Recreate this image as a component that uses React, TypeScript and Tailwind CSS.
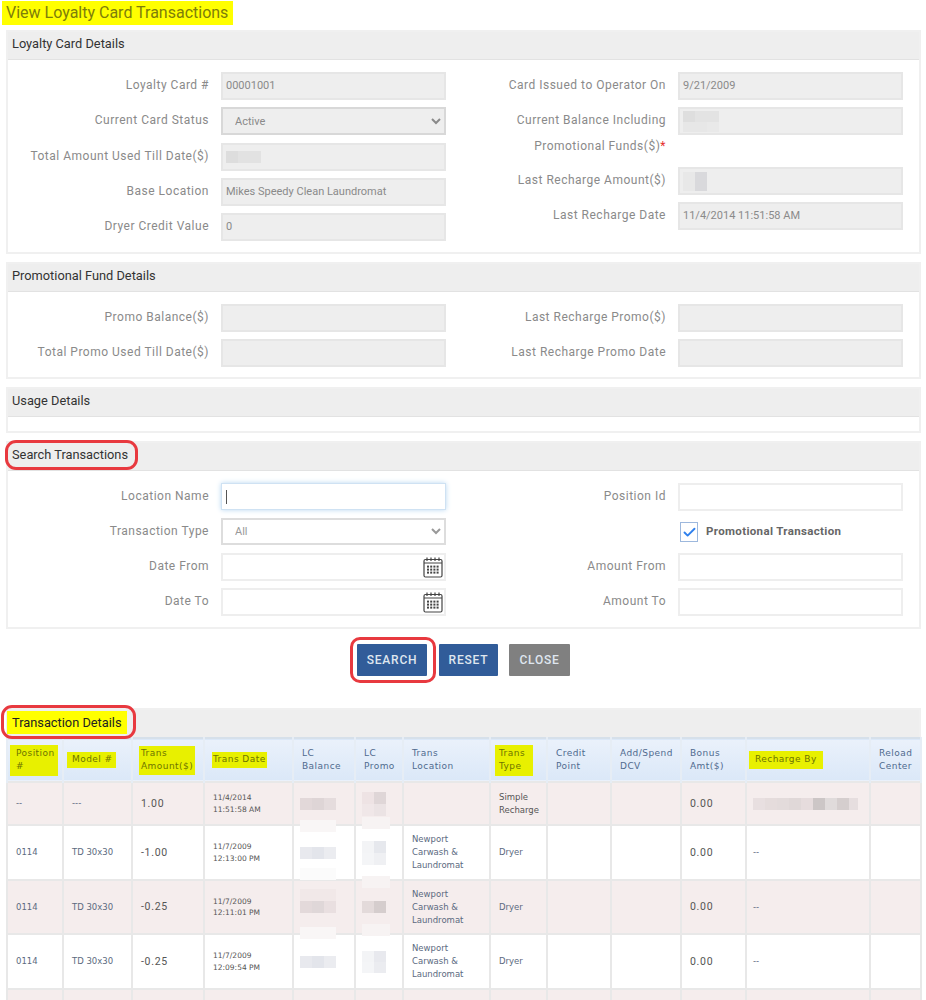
import React from "react";
import { Check } from "lucide-react";

const roboto = "font-['Roboto',sans-serif]";

function Calendar() {
  const dots = [];
  for (let r = 0; r < 3; r++) for (let c = 0; c < 4; c++) dots.push(<rect key={`${r}${c}`} x={4 + c * 3.2} y={8.6 + r * 3} width="2" height="2" fill="#444" />);
  return (
    <svg width="20" height="21" viewBox="0 0 20 21" className="shrink-0">
      <rect x="1" y="2.5" width="18" height="17.5" rx="1.5" fill="none" stroke="#444" strokeWidth="1.2" />
      <line x1="1" y1="6" x2="19" y2="6" stroke="#444" strokeWidth="1" />
      {[4, 8, 12, 16].map((x) => <line key={x} x1={x} y1="0.5" x2={x} y2="4" stroke="#444" strokeWidth="1.2" />)}
      {dots}
    </svg>
  );
}

function Panel({ title, ring, children, className }: { title: string; ring?: boolean; children?: React.ReactNode; className: string }) {
  return (
    <section className={`mx-[6px] w-[915px] border-2 border-[#f0f0f0] bg-white ${className}`}>
      <div className="flex h-[28px] items-center border-b border-[#e2e2e2] bg-[#eeeeee] pb-[3px] pl-[4px] text-[12.8px] text-[#333]">
        <span className="relative">
          {title}
          {ring && <span className="absolute -inset-y-[5px] -left-[7px] -right-[10px] rounded-[11px] border-[3px] border-[#e8393f]" />}
        </span>
      </div>
      {children}
    </section>
  );
}

function Label({ children, w }: { children: React.ReactNode; w: string }) {
  return <div className={`${w} text-right text-[12px] leading-[27px] tracking-[0.5px] text-[#8a8a8a]`}>{children}</div>;
}

const disabledBox = "flex h-[28px] w-[225px] items-center border-2 border-[#e6e6e6] bg-[#eeeeee] px-[3px] text-[11px] text-[#8a8a8a]";
const emptyBox = "flex h-[28px] w-[225px] items-center justify-end border-2 border-[#eeeeee] bg-white pr-[1px]";

function Row({ label, w, children, cls = "h-[35px]" }: { label: React.ReactNode; w: string; children: React.ReactNode; cls?: string }) {
  return (
    <div className={`flex gap-[12px] ${cls}`}>
      <Label w={w}>{label}</Label>
      {children}
    </div>
  );
}

const LW = "w-[201px]";
const RW = "w-[219px]";

function Columns({ left, right, pb }: { left: React.ReactNode; right: React.ReactNode; pb: string }) {
  return (
    <div className={`flex pt-[12px] ${pb}`}>
      <div className="w-[439px]">{left}</div>
      <div>{right}</div>
    </div>
  );
}

function Mosaic({ cols, cls = "h-[12px]" }: { cols: string[]; cls?: string }) {
  return (
    <div className={`flex w-fit ${cls}`}>
      {cols.map((c, i) => <div key={i} className={c} />)}
    </div>
  );
}

const H = ({ children, mark = "" }: { children: React.ReactNode; mark?: string }) => (
  <th className="border-x-2 border-[#e6edf5] px-[8px] text-left align-middle font-normal">
    {mark ? <span className={`inline-block bg-[#e8f000] text-[#6d7400] ${mark}`}>{children}</span> : children}
  </th>
);

const cell = "border-2 border-[#e8e8e8] px-[8px] align-middle";
const num = `${roboto} text-[10.5px] tracking-[0.7px] text-[#555]`;
const patch = "absolute z-10";

type RowData = {
  pos: string; model: string; amt: string; d1: string; d2: string; h: string; bg: string;
  bal: React.ReactNode; pro: React.ReactNode; loc: boolean; type: React.ReactNode; by: React.ReactNode;
};

const rows: RowData[] = [
  {
    pos: "--", model: "---", amt: "1.00", d1: "11/4/2014", d2: "11:51:58 AM", h: "h-[43px]", bg: "bg-[#f5eded]",
    bal: <><Mosaic cols={["w-[12px] bg-[#e2d8d9]", "w-[12px] bg-[#ded5d6]", "w-[12px] bg-[#e5dcdd]"]} /><div className={`${patch} left-[6px] top-[37px] h-[12px] w-[36px] bg-[#f9f6f6]`} /></>,
    pro: <><div className="grid w-[24px] grid-cols-2"><div className="h-[12px] bg-[#eee3e4]" /><div className="h-[12px] bg-[#dfd6d7]" /><div className="h-[12px] bg-[#f0e7e8]" /><div className="h-[12px] bg-[#ebe3e4]" /></div><div className={`${patch} left-[6px] top-[34px] h-[12px] w-[28px] bg-[#f7f3f3]`} /></>,
    loc: false,
    type: <span className="block leading-[13px] text-[#555]">Simple<br />Recharge</span>,
    by: <Mosaic cols={["w-[12px] bg-[#e8dfe0]", "w-[12px] bg-[#e5dcdc]", "w-[12px] bg-[#e3dbdb]", "w-[12px] bg-[#e0d8d8]", "w-[12px] bg-[#e6dcdd]", "w-[12px] bg-[#ccc6c6]", "w-[12px] bg-[#e0dbdb]", "w-[12px] bg-[#d5cece]", "w-[9px] bg-[#e6dedf]"]} />,
  },
  {
    pos: "0114", model: "TD 30x30", amt: "-1.00", d1: "11/7/2009", d2: "12:13:00 PM", h: "h-[55px]", bg: "bg-white",
    bal: <><Mosaic cols={["w-[12px] bg-[#e8e9ee]", "w-[12px] bg-[#e3e5eb]", "w-[12px] bg-[#ebecf0]"]} /><div className={`${patch} left-[6px] top-[42px] h-[12px] w-[36px] bg-[#fbfbfb]`} /></>,
    pro: <><div className="grid w-[24px] grid-cols-2"><div className="h-[12px] bg-[#f3f4f6]" /><div className="h-[12px] bg-[#e6e8ed]" /><div className="h-[12px] bg-[#f4f5f7]" /><div className="h-[12px] bg-[#eff0f3]" /></div><div className={`${patch} left-[6px] top-[50px] h-[12px] w-[28px] bg-[#f7f3f3]`} /></>,
    loc: true, type: "Dryer", by: "--",
  },
  {
    pos: "0114", model: "TD 30x30", amt: "-0.25", d1: "11/7/2009", d2: "12:11:01 PM", h: "h-[54px]", bg: "bg-[#f5eded]",
    bal: <><div className="-mt-[12px]"><Mosaic cols={["w-[36px] bg-[#f1e8e8]"]} /></div><Mosaic cols={["w-[12px] bg-[#e3d9da]", "w-[12px] bg-[#dfd7d8]", "w-[12px] bg-[#e9dfe0]"]} /><div className={`${patch} left-[6px] top-[46px] h-[12px] w-[36px] bg-[#f9f6f6]`} /></>,
    pro: <><Mosaic cols={["w-[12px] bg-[#e3dada]", "w-[12px] bg-[#d5cdcd]"]} /><div className={`${patch} left-[6px] top-[43px] h-[12px] w-[28px] bg-[#f7f3f3]`} /></>,
    loc: true, type: "Dryer", by: "--",
  },
  {
    pos: "0114", model: "TD 30x30", amt: "-0.25", d1: "11/7/2009", d2: "12:09:54 PM", h: "h-[55px]", bg: "bg-white",
    bal: <Mosaic cols={["w-[12px] bg-[#e8e9ee]", "w-[12px] bg-[#e3e5eb]", "w-[12px] bg-[#ebecf0]"]} />,
    pro: <div className="grid w-[24px] grid-cols-2"><div className="h-[11px] bg-[#f3f4f6]" /><div className="h-[11px] bg-[#e8e9ee]" /><div className="h-[11px] bg-[#f4f5f7]" /><div className="h-[11px] bg-[#ebecf0]" /></div>,
    loc: true, type: "Dryer", by: "--",
  },
];

export default function App() {
  return (
    <div className={`h-[1000px] w-[926px] overflow-hidden bg-white ${roboto}`}>
      <div className="h-[30px] pl-[2px] pt-[1px]">
        <div className="flex h-[24px] w-[231px] items-center whitespace-nowrap bg-[#ffff00] pl-[4px] text-[16px] text-[#7d7d0a]">View Loyalty Card Transactions</div>
      </div>

      <Panel title="Loyalty Card Details" className="h-[224px]">
        <Columns
          pb="pb-[12px]"
          left={<>
            <Row label="Loyalty Card #" w={LW}><div className={disabledBox}>00001001</div></Row>
            <Row label="Current Card Status" w={LW} cls="h-[36px]">
              <select defaultValue="Active" className="h-[28px] w-[225px] border-2 border-[#d8d8d8] bg-[#eeeeee] pl-[8px] text-[11px] text-[#8a8a8a]"><option>Active</option></select>
            </Row>
            <Row label="Total Amount Used Till Date($)" w={LW}><div className={disabledBox}><Mosaic cols={["w-[12px] bg-[#dddddd]", "w-[23px] bg-[#e2e2e2]"]} /></div></Row>
            <Row label="Base Location" w={LW}><div className={disabledBox}>Mikes Speedy Clean Laundromat</div></Row>
            <Row label="Dryer Credit Value" w={LW}><div className={disabledBox}>0</div></Row>
          </>}
          right={<>
            <Row label="Card Issued to Operator On" w={RW}><div className={disabledBox}>9/21/2009</div></Row>
            <Row cls="h-[60px]" w={RW} label={<div className="leading-[26px]">Current Balance Including<br />Promotional Funds($)<span className="text-[#e52e2e]">*</span></div>}>
              <div className={disabledBox}>
                <div className="grid w-[36px] grid-cols-3">
                  <div className="h-[11px] bg-[#dedede]" /><div className="h-[11px] bg-[#e3e3e3]" /><div className="h-[11px] bg-[#e3e3e3]" />
                  <div className="h-[10px] bg-[#e7e7e7]" /><div className="h-[10px] bg-[#e7e7e7]" /><div className="h-[10px] bg-[#e9e9e9]" />
                </div>
              </div>
            </Row>
            <Row label="Last Recharge Amount($)" w={RW}><div className={disabledBox}><Mosaic cls="h-[19px]" cols={["w-[12px] bg-[#e8e8e8]", "w-[12px] bg-[#d9d9dc]"]} /></div></Row>
            <Row label="Last Recharge Date" w={RW}><div className={disabledBox}>11/4/2014 11:51:58 AM</div></Row>
          </>}
        />
      </Panel>

      <Panel title="Promotional Fund Details" className="mt-[8px] h-[117px]">
        <Columns
          pb="pb-[10px]"
          left={<>
            <Row label="Promo Balance($)" w={LW}><div className={disabledBox} /></Row>
            <Row label="Total Promo Used Till Date($)" w={LW}><div className={disabledBox} /></Row>
          </>}
          right={<>
            <Row label="Last Recharge Promo($)" w={RW}><div className={disabledBox} /></Row>
            <Row label="Last Recharge Promo Date" w={RW}><div className={disabledBox} /></Row>
          </>}
        />
      </Panel>

      <Panel title="Usage Details" className="mt-[8px] h-[46px]" />

      <Panel title="Search Transactions" ring className="mt-[8px] h-[188px]">
        <Columns
          pb="pb-[10px]"
          left={<>
            <Row label="Location Name" w={LW}>
              <div className="flex h-[27px] w-[225px] items-center border border-[#cfe2f3] bg-white pl-[4px] shadow-[0_0_5px_#b9d8f2]"><div className="h-[14px] w-px bg-[#555]" /></div>
            </Row>
            <Row label="Transaction Type" w={LW}>
              <select defaultValue="All" className="h-[27px] w-[225px] border-2 border-[#dddddd] bg-white pl-[8px] text-[11px] text-[#999]"><option>All</option></select>
            </Row>
            <Row label="Date From" w={LW}><div className={emptyBox}><Calendar /></div></Row>
            <Row label="Date To" w={LW}><div className={emptyBox}><Calendar /></div></Row>
          </>}
          right={<>
            <Row label="Position Id" w={RW}><div className={emptyBox} /></Row>
            <Row label="" w={RW}>
              <div className="flex h-[28px] items-center gap-[8px] pl-[2px]">
                <div className="flex h-[20px] w-[18px] items-center justify-center border border-[#9db8dd] bg-white"><Check size={15} strokeWidth={3} color="#2f80ed" /></div>
                <span className="text-[11.5px] font-bold tracking-[0.35px] text-[#666]">Promotional Transaction</span>
              </div>
            </Row>
            <Row label="Amount From" w={RW}><div className={emptyBox} /></Row>
            <Row label="Amount To" w={RW}><div className={emptyBox} /></Row>
          </>}
        />
      </Panel>

      <div className="mt-[15px] flex h-[33px] pl-[357px] text-[12px] font-medium tracking-[0.8px] text-[#dfe6ef]">
        <button className="relative h-[32px] w-[70px] rounded-[1px] bg-[#315c99]">
          SEARCH
          <span className="absolute -inset-y-[7px] -left-[7px] -right-[9px] rounded-[10px] border-[3px] border-[#e8393f]" />
        </button>
        <button className="ml-[12px] h-[32px] w-[59px] rounded-[1px] bg-[#315c99]">RESET</button>
        <button className="ml-[11px] h-[32px] w-[61px] rounded-[1px] bg-[#808080]">CLOSE</button>
      </div>

      <section className="mx-[6px] mt-[31px] w-[915px] border-x-2 border-t-2 border-[#f0f0f0]">
        <div className="flex h-[27px] items-center bg-[#eeeeee] pb-[2px] pl-[4px] text-[12.8px] text-[#222]">
          <span className="relative">
            <span className="relative z-10 -mx-[5px] inline-block bg-[#ffff00] px-[5px] leading-[23px]">Transaction Details</span>
            <span className="absolute -bottom-[5px] -left-[11px] -right-[14px] -top-[6px] rounded-[11px] border-[3px] border-[#e8393f]" />
          </span>
        </div>
        <table className="-ml-[2px] w-[914px] table-fixed border-collapse font-['DejaVu_Sans',sans-serif] text-[8.5px]">
          <colgroup>
            <col className="w-[56px]" /><col className="w-[69px]" /><col className="w-[72px]" /><col className="w-[89px]" /><col className="w-[62px]" /><col className="w-[48px]" /><col className="w-[87px]" /><col className="w-[57px]" /><col className="w-[64px]" /><col className="w-[70px]" /><col className="w-[65px]" /><col className="w-[124px]" /><col className="w-[51px]" />
          </colgroup>
          <thead>
            <tr className="h-[44px] border-y-2 border-[#d6e0ea] bg-gradient-to-b from-[#eaf1fb] to-[#dbe8f8] text-[9px] leading-[13.5px] tracking-[0.45px] text-[#4f6a8e]">
              <H mark="-ml-[6px] py-[2px] pl-[6px] pr-[3px]">Position<br />#</H>
              <H mark="-ml-[5px] pl-[5px] pr-[3px] py-[1px]">Model #</H>
              <H mark="-ml-[2px] px-[2px] py-[1px]">Trans<br />Amount($)</H>
              <H mark="-ml-[1px] px-[1px] py-[1px]">Trans Date</H>
              <H>LC<br />Balance</H>
              <H>LC<br />Promo</H>
              <H>Trans<br />Location</H>
              <H mark="-ml-[4px] pl-[4px] pr-[8px] py-[2px]">Trans<br />Type</H>
              <H>Credit<br />Point</H>
              <H>Add/Spend<br />DCV</H>
              <H>Bonus<br />Amt($)</H>
              <H mark="-ml-[6px] px-[6px] py-[2px]">Recharge By</H>
              <H>Reload<br />Center</H>
            </tr>
          </thead>
          <tbody className="text-[#5b6a80]">
            {rows.map((r, i) => (
              <tr key={i} className={`${r.h} ${r.bg}`}>
                <td className={cell}>{r.pos}</td>
                <td className={cell}>{r.model}</td>
                <td className={`${cell} ${num}`}>{r.amt}</td>
                <td className={`${cell} text-[7.5px] leading-[11.5px] text-[#555]`}>{r.d1}<br />{r.d2}</td>
                <td className={`${cell} relative pl-[6px]`}>{r.bal}</td>
                <td className={`${cell} relative pl-[6px]`}>{r.pro}</td>
                <td className={`${cell} leading-[13px]`}>{r.loc && <>Newport<br />Carwash &amp;<br />Laundromat</>}</td>
                <td className={cell}>{r.type}</td>
                <td className={cell} />
                <td className={cell} />
                <td className={`${cell} ${num}`}>0.00</td>
                <td className={`${cell} pl-[6px]`}>{r.by}</td>
                <td className={cell} />
              </tr>
            ))}
            <tr className="h-[20px] bg-[#f5eded]">
              {Array.from({ length: 13 }).map((_, i) => <td key={i} className={cell} />)}
            </tr>
          </tbody>
        </table>
      </section>
    </div>
  );
}
